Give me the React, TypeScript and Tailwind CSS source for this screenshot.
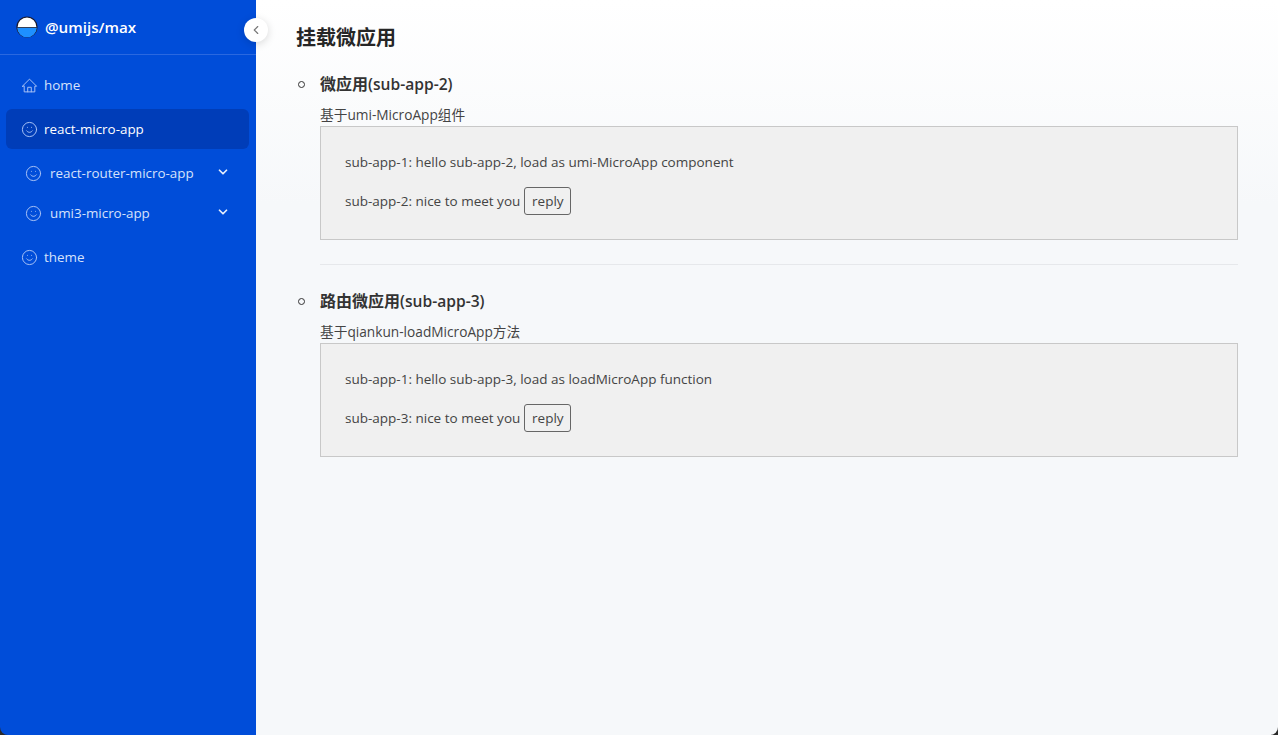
import React from 'react';
import { ChevronDown, ChevronLeft, Smile } from 'lucide-react';

const FONT = "font-['Open_Sans','Noto_Sans_CJK_SC',sans-serif]";

function Logo() {
  return (
    <svg width="22" height="22" viewBox="0 0 22 22">
      <circle cx="11" cy="11" r="10" fill="#fff" stroke="#1a1a2e" strokeWidth="1.2" />
      <path d="M1.2 11.5h19.6a9.8 9.8 0 0 1-19.6 0z" fill="#1e90ff" />
      <path d="M1.2 11.5h19.6" stroke="#1a1a2e" strokeWidth="0.8" />
    </svg>
  );
}

function HomeIcon() {
  return (
    <svg width="17" height="17" viewBox="0 0 24 24" fill="none" stroke="currentColor" strokeWidth="1.4" strokeLinejoin="round" strokeLinecap="round" className="text-[#a8c1f5] shrink-0">
      <path d="M2 13 12 3l10 10h-2.500v8h-15v-8z" />
      <path d="M9.500 21v-6.500h5V21" />
    </svg>
  );
}

function MenuItem({ label, active, nested, icon }: { label: string; active?: boolean; nested?: boolean; icon: 'home' | 'smile' }) {
  return (
    <div
      className={`flex items-center h-10 rounded-md ml-1.5 mr-[7px] ${nested ? 'pl-[18.5px] pr-[19px]' : 'pl-[14.5px] pr-4'} ${active ? 'bg-[#003db8] text-white' : 'text-[#d6e2fb]'}`}
    >
      {icon === 'home' ? <HomeIcon /> : <Smile size={17} strokeWidth={1.4} className="text-[#a8c1f5] shrink-0" />}
      <span className={`text-[13.4px] ${nested ? 'ml-[8.5px]' : 'ml-[6.5px]'} flex-1`}>{label}</span>
      {nested && <ChevronDown size={14} strokeWidth={3} className="text-[#e6eefc] mt-[-2px]" />}
    </div>
  );
}

function Dialog({ lines, name }: { lines: string; name: string }) {
  return (
    <div className="h-[114px] border border-[#c8c8c8] bg-[#f0f0f0] pl-6 pt-[25px] text-[13.5px] text-[#444]">
      <div className="h-5 leading-5">{lines}</div>
      <div className="flex items-center mt-[15px] h-7">
        <span>{name}: nice to meet you</span>
        <button className="ml-1 h-7 w-[47px] rounded-[3px] border border-[#666] text-[13.5px] text-[#444]">reply</button>
      </div>
    </div>
  );
}

function Section({ title, suffix, desc, children }: { title: string; suffix: string; desc: string; children: React.ReactNode }) {
  return (
    <li className="list-none text-[14px]">
      <h3 className="relative text-[16px] font-semibold leading-6 text-[#333]">
        <span className="absolute -left-[22px] top-[9px] h-[7px] w-[7px] rounded-full border-[1.5px] border-[#333]" />
        {title}
        <span className="text-[15.6px]">{suffix}</span>
      </h3>
      <p className="mt-2 h-[22px] leading-[22px] text-[13.7px] text-[#444]">{desc}</p>
      {children}
    </li>
  );
}

export default function App() {
  return (
    <div className={`h-[735px] w-[1278px] overflow-hidden bg-[#2a2a2a] ${FONT}`}>
      <div className="relative flex h-full rounded-b-lg overflow-hidden">
        <aside className="w-[256px] shrink-0 bg-[#004dd9] flex flex-col">
          <div className="h-[55px] shrink-0 flex items-center pl-4 border-b border-[#2a68e0]">
            <Logo />
            <span className="ml-[7px] text-white text-[15.2px] font-semibold">@umijs/max</span>
          </div>
          <nav className="pt-[10px] flex flex-col gap-1">
            <MenuItem label="home" icon="home" />
            <MenuItem label="react-micro-app" icon="smile" active />
            <MenuItem label="react-router-micro-app" icon="smile" nested />
            <div className="-mt-1">
              <MenuItem label="umi3-micro-app" icon="smile" nested />
            </div>
            <MenuItem label="theme" icon="smile" />
          </nav>
        </aside>
        <div className="absolute left-[244px] top-[18px] h-6 w-6 rounded-full bg-white shadow-[0_2px_8px_rgba(0,0,0,0.15)] flex items-center justify-center">
          <ChevronLeft size={14} strokeWidth={2} className="text-[#777]" />
        </div>
        <main className="flex-1 bg-[linear-gradient(#ffffff,#f6f8fa_205px)] pl-10 pr-10 pt-6">
          <h2 className="text-[20px] font-bold leading-7 text-[#262626]">挂载微应用</h2>
          <ul className="mt-5 pl-6">
            <Section title="微应用" suffix="(sub-app-2)" desc="基于umi-MicroApp组件">
              <Dialog name="sub-app-2" lines="sub-app-1: hello sub-app-2, load as umi-MicroApp component" />
            </Section>
            <hr className="mt-6 mb-6 border-[#e6e8eb]" />
            <Section title="路由微应用" suffix="(sub-app-3)" desc="基于qiankun-loadMicroApp方法">
              <Dialog name="sub-app-3" lines="sub-app-1: hello sub-app-3, load as loadMicroApp function" />
            </Section>
          </ul>
        </main>
      </div>
    </div>
  );
}
